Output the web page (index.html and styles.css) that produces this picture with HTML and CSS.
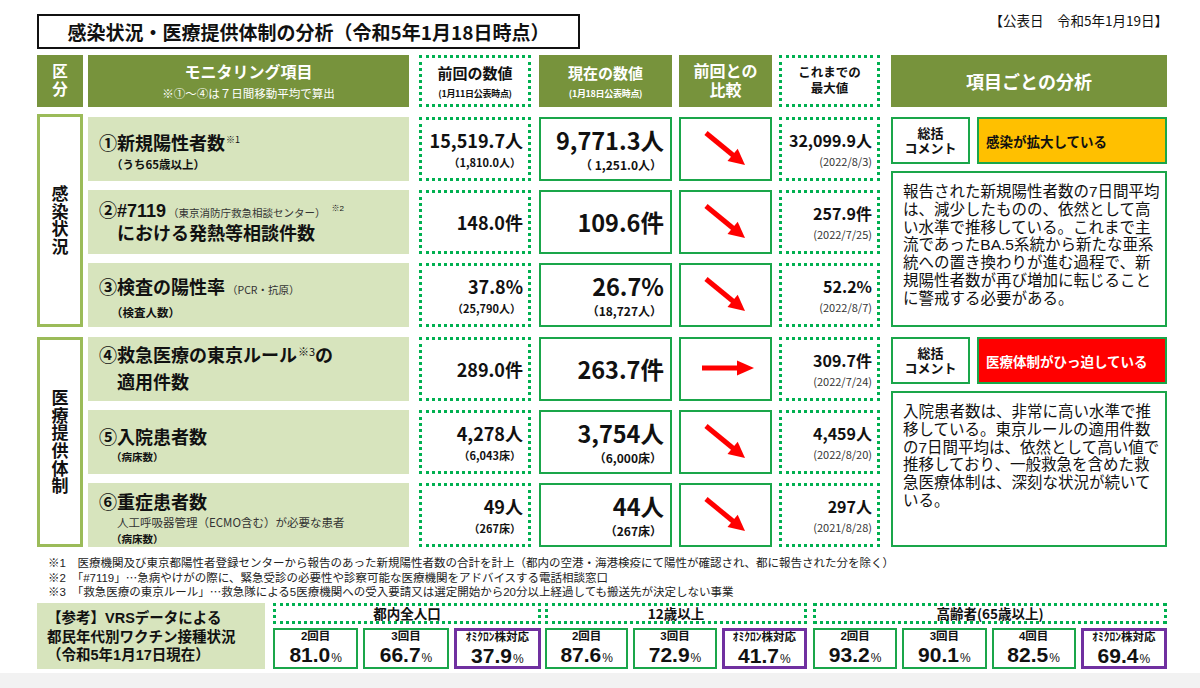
FILE: index.html
```html
<!DOCTYPE html>
<html lang="ja">
<head>
<meta charset="utf-8">
<title>感染状況・医療提供体制の分析</title>
<link rel="stylesheet" href="styles.css">
</head>
<body>
<div class="page">
  <div class="top">
    <div class="title">感染状況・医療提供体制の分析（令和5年1月18日時点）</div>
    <div class="pubdate">【公表日　令和5年1月19日】</div>
  </div>

  <div class="hdr">
    <div class="c-cat h-green h-cat">区<br>分</div>
    <div class="c-mon h-green"><div class="h-mon-t">モニタリング項目</div><div class="h-mon-s">※①～④は７日間移動平均で算出</div></div>
    <div class="c-prev h-dot"><div class="h-t">前回の数値</div><div class="h-s">(1月11日公表時点)</div></div>
    <div class="c-cur h-green"><div class="h-t">現在の数値</div><div class="h-s">(1月18日公表時点)</div></div>
    <div class="c-cmp h-green h-cmp">前回との<br>比較</div>
    <div class="c-max h-dot h-max">これまでの<br>最大値</div>
    <div class="c-ana h-green h-ana">項目ごとの分析</div>
  </div>

  <div class="section">
    <div class="cat cat-first"><span>感染状況</span></div>
    <div class="rows">
      <div class="drow">
        <div class="mon mon-a">
          <div class="mt">①新規陽性者数<span class="sup">※1</span></div>
          <div class="ms">（うち65歳以上）</div>
        </div>
        <div class="prev"><div class="pv">15,519.7人</div><div class="ps">（1,810.0人）</div></div>
        <div class="cur"><div class="cv">9,771.3人</div><div class="cs">（ 1,251.0人）</div></div>
        <div class="cmp"><svg class="arr-d" width="45" height="38" viewBox="0 0 45 38"><line x1="3" y1="3" x2="31" y2="26" stroke="#ff0000" stroke-width="5"/><polygon points="42,35 24.5,31.1 34.7,18.7" fill="#ff0000"/></svg></div>
        <div class="max"><div class="xv">32,099.9人</div><div class="xs">(2022/8/3)</div></div>
      </div>
      <div class="drow">
        <div class="mon">
          <div class="mt mt2">②#7119<span class="mnote">（東京消防庁救急相談センター）</span><span class="sup sup-s">※2</span><br><span class="ind">における発熱等相談件数</span></div>
        </div>
        <div class="prev"><div class="pv">148.0件</div></div>
        <div class="cur"><div class="cv">109.6件</div></div>
        <div class="cmp"><svg class="arr-d" width="45" height="38" viewBox="0 0 45 38"><line x1="3" y1="3" x2="31" y2="26" stroke="#ff0000" stroke-width="5"/><polygon points="42,35 24.5,31.1 34.7,18.7" fill="#ff0000"/></svg></div>
        <div class="max"><div class="xv">257.9件</div><div class="xs">(2022/7/25)</div></div>
      </div>
      <div class="drow">
        <div class="mon mon-a">
          <div class="mt">③検査の陽性率<span class="mnote">（PCR・抗原）</span></div>
          <div class="ms">（検査人数）</div>
        </div>
        <div class="prev"><div class="pv">37.8%</div><div class="ps">（25,790人）</div></div>
        <div class="cur"><div class="cv">26.7%</div><div class="cs">（18,727人）</div></div>
        <div class="cmp"><svg class="arr-d" width="45" height="38" viewBox="0 0 45 38"><line x1="3" y1="3" x2="31" y2="26" stroke="#ff0000" stroke-width="5"/><polygon points="42,35 24.5,31.1 34.7,18.7" fill="#ff0000"/></svg></div>
        <div class="max"><div class="xv">52.2%</div><div class="xs">(2022/8/7)</div></div>
      </div>
    </div>
    <div class="ana">
      <div class="sum">
        <div class="sum-l">総括<br>コメント</div>
        <div class="sum-r yellow">感染が拡大している</div>
      </div>
      <div class="atext">報告された新規陽性者数の7日間平均<br>は、減少したものの、依然として高<br>い水準で推移している。これまで主<br>流であったBA.5系統から新たな亜系<br>統への置き換わりが進む過程で、新<br>規陽性者数が再び増加に転じること<br>に警戒する必要がある。</div>
    </div>
  </div>

  <div class="section">
    <div class="cat"><span>医療提供体制</span></div>
    <div class="rows">
      <div class="drow">
        <div class="mon mon-4">
          <div class="mt mt4">④救急医療の東京ルール<span class="sup sup-m">※3</span>の<br><span class="ind">適用件数</span></div>
        </div>
        <div class="prev"><div class="pv">289.0件</div></div>
        <div class="cur"><div class="cv">263.7件</div></div>
        <div class="cmp"><svg class="arr-r" width="52" height="16" viewBox="0 0 52 16"><line x1="0" y1="8" x2="37" y2="8" stroke="#ff0000" stroke-width="5"/><polygon points="52,8 35,0.5 35,15.5" fill="#ff0000"/></svg></div>
        <div class="max"><div class="xv">309.7件</div><div class="xs">(2022/7/24)</div></div>
      </div>
      <div class="drow">
        <div class="mon mon-a">
          <div class="mt">⑤入院患者数</div>
          <div class="ms ms-s">（病床数）</div>
        </div>
        <div class="prev"><div class="pv">4,278人</div><div class="ps">（6,043床）</div></div>
        <div class="cur"><div class="cv">3,754人</div><div class="cs">（6,000床）</div></div>
        <div class="cmp"><svg class="arr-d" width="45" height="38" viewBox="0 0 45 38"><line x1="3" y1="3" x2="31" y2="26" stroke="#ff0000" stroke-width="5"/><polygon points="42,35 24.5,31.1 34.7,18.7" fill="#ff0000"/></svg></div>
        <div class="max"><div class="xv">4,459人</div><div class="xs">(2022/8/20)</div></div>
      </div>
      <div class="drow">
        <div class="mon mon-6">
          <div class="mt">⑥重症患者数</div>
          <div class="mnote2">人工呼吸器管理（ECMO含む）が必要な患者</div>
          <div class="ms ms-s ms-6">（病床数）</div>
        </div>
        <div class="prev"><div class="pv">49人</div><div class="ps">（267床）</div></div>
        <div class="cur"><div class="cv">44人</div><div class="cs">（267床）</div></div>
        <div class="cmp"><svg class="arr-d" width="45" height="38" viewBox="0 0 45 38"><line x1="3" y1="3" x2="31" y2="26" stroke="#ff0000" stroke-width="5"/><polygon points="42,35 24.5,31.1 34.7,18.7" fill="#ff0000"/></svg></div>
        <div class="max"><div class="xv">297人</div><div class="xs">(2021/8/28)</div></div>
      </div>
    </div>
    <div class="ana">
      <div class="sum">
        <div class="sum-l">総括<br>コメント</div>
        <div class="sum-r red">医療体制がひっ迫している</div>
      </div>
      <div class="atext">入院患者数は、非常に高い水準で推<br>移している。東京ルールの適用件数<br>の7日間平均は、依然として高い値で<br>推移しており、一般救急を含めた救<br>急医療体制は、深刻な状況が続いて<br>いる。</div>
    </div>
  </div>

  <div class="notes">※1　医療機関及び東京都陽性者登録センターから報告のあった新規陽性者数の合計を計上（都内の空港・海港検疫にて陽性が確認され、都に報告された分を除く）<br>※2　「#7119」<span class="ell">…</span>急病やけがの際に、緊急受診の必要性や診察可能な医療機関をアドバイスする電話相談窓口<br>※3　「救急医療の東京ルール」<span class="ell">…</span>救急隊による5医療機関への受入要請又は選定開始から20分以上経過しても搬送先が決定しない事業</div>

  <div class="vac">
    <div class="vrs">【参考】VRSデータによる<br>都民年代別ワクチン接種状況<br>（令和5年1月17日現在）</div>
    <div class="grp g1">
      <div class="gh">都内全人口</div>
      <div class="cards">
        <div class="card"><div class="cl">2回目</div><div class="cvl">81.0<span class="pc">%</span></div></div>
        <div class="card"><div class="cl">3回目</div><div class="cvl">66.7<span class="pc">%</span></div></div>
        <div class="card purple"><div class="cl">ｵﾐｸﾛﾝ株対応</div><div class="cvl">37.9<span class="pc">%</span></div></div>
      </div>
    </div>
    <div class="grp g2">
      <div class="gh">12歳以上</div>
      <div class="cards">
        <div class="card"><div class="cl">2回目</div><div class="cvl">87.6<span class="pc">%</span></div></div>
        <div class="card"><div class="cl">3回目</div><div class="cvl">72.9<span class="pc">%</span></div></div>
        <div class="card purple"><div class="cl">ｵﾐｸﾛﾝ株対応</div><div class="cvl">41.7<span class="pc">%</span></div></div>
      </div>
    </div>
    <div class="grp g3">
      <div class="gh">高齢者(65歳以上)</div>
      <div class="cards">
        <div class="card"><div class="cl">2回目</div><div class="cvl">93.2<span class="pc">%</span></div></div>
        <div class="card"><div class="cl">3回目</div><div class="cvl">90.1<span class="pc">%</span></div></div>
        <div class="card"><div class="cl">4回目</div><div class="cvl">82.5<span class="pc">%</span></div></div>
        <div class="card purple"><div class="cl">ｵﾐｸﾛﾝ株対応</div><div class="cvl">69.4<span class="pc">%</span></div></div>
      </div>
    </div>
  </div>
</div>
<div class="band"></div>
</body>
</html>
```

FILE: styles.css
```css
* { box-sizing: border-box; margin: 0; padding: 0; }
html, body { width: 1200px; height: 688px; overflow: hidden; background: #fff; }
body { font-family: "Noto Sans CJK JP", "Noto Sans", sans-serif; color: #111; }

/* multi-line blocks: Latin primary font (compact line metrics), CJK glyphs from Noto */
.h-cat, .h-cmp, .h-max, .sum-l, .atext, .notes, .vrs, .mt2, .card {
  font-family: "Liberation Sans", "Noto Sans CJK JP", sans-serif;
}
.ell { font-family: "Noto Sans CJK JP", sans-serif; line-height: 0; }

.page { padding-left: 37px; width: 1167px; }

.top { display: flex; justify-content: space-between; align-items: flex-start; padding-top: 14px; }
.title { width: 543px; height: 35px; border: 2px solid #111; font-size: 19px; font-weight: 700; line-height: 31px; text-align: center; white-space: nowrap; }
.pubdate { font-size: 13.5px; line-height: 18px; margin-top: -3px; margin-right: -1px; white-space: nowrap; }

/* column sizes */
.c-cat { width: 46px; }
.c-mon { width: 321px; margin-left: 5px; }
.c-prev { width: 112px; margin-left: 10px; }
.c-cur { width: 133px; margin-left: 8px; }
.c-cmp { width: 93px; margin-left: 7px; }
.c-max { width: 101px; margin-left: 7px; }
.c-ana { width: 276px; margin-left: 11px; }

/* header */
.hdr { display: flex; margin-top: 6px; height: 52px; }
.hdr > div { display: flex; flex-direction: column; align-items: center; justify-content: center; text-align: center; font-weight: 700; white-space: nowrap; }
.h-green { background: #77933c; color: #fff; }
.h-dot { border: 3px dotted #00b050; background: #fff; color: #111; }
.h-cat { font-size: 15.5px; line-height: 17.8px; }
.h-mon-t { font-size: 16px; line-height: 20px; }
.h-mon-s { font-size: 11.5px; font-weight: 400; line-height: 16px; margin-top: 4px; }
.h-t { font-size: 15px; line-height: 20px; }
.h-s { font-size: 9px; line-height: 12px; margin-top: 5px; letter-spacing: -0.3px; }
.h-cmp { font-size: 16px; line-height: 19px; }
.h-max { font-size: 12.5px; line-height: 16px; }
.h-ana { font-size: 18px; line-height: 22px; }

/* sections */
.section { display: flex; margin-top: 10px; }
.cat { width: 46px; border: 3px solid #9bbb59; display: flex; align-items: center; justify-content: center; }
.cat-first { margin-top: -3px; }
.cat span { writing-mode: vertical-rl; font-size: 17px; font-weight: 700; line-height: 1; letter-spacing: 0.7px; }

.rows { display: flex; flex-direction: column; gap: 9px; margin-left: 5px; width: 792px; }
.drow { display: flex; height: 64px; }

.mon { width: 321px; background: #d7e4bd; padding-left: 11px; display: flex; flex-direction: column; justify-content: center; white-space: nowrap; }
.mon-a { padding-top: 5px; }
.mon-6 { padding-top: 4px; }
.mt { font-size: 18px; font-weight: 700; line-height: 22px; }
.mt2 { line-height: 21px; padding-top: 1px; }
.mt4 { line-height: 27px; padding-bottom: 3px; }
.ind { padding-left: 18px; }
.sup { font-size: 9px; font-weight: 400; line-height: 0; vertical-align: 7px; margin-left: 1px; }
.sup-s { font-size: 8px; margin-left: 6px; vertical-align: 6px; }
.sup-m { font-size: 11px; vertical-align: 6px; }
.mnote { font-size: 10.5px; font-weight: 400; color: #333; margin-left: 2px; }
.ms { font-size: 11.5px; font-weight: 700; line-height: 16px; margin-top: 3px; margin-left: 12px; }
.ms-s { font-size: 10.5px; line-height: 14px; }
.ms-6 { margin-top: 2px; line-height: 13px; }
.mnote2 { font-size: 11.5px; color: #333; line-height: 15px; margin-top: 3px; margin-left: 18px; }

.prev { width: 112px; margin-left: 10px; border: 3px dotted #00b050; display: flex; flex-direction: column; justify-content: center; align-items: flex-end; padding-right: 5px; white-space: nowrap; }
.pv { font-size: 18px; font-weight: 700; line-height: 22px; }
.ps { font-size: 11px; font-weight: 700; line-height: 16px; margin-top: 3px; margin-right: 2px; }

.cur { width: 133px; margin-left: 8px; border: 2.5px solid #1aa64a; display: flex; flex-direction: column; justify-content: center; align-items: flex-end; padding-right: 6px; white-space: nowrap; }
.cv { font-size: 23.5px; font-weight: 700; line-height: 31px; }
.cs { font-size: 12px; font-weight: 700; line-height: 17.5px; margin-right: 2px; }

.cmp { width: 93px; margin-left: 7px; border: 2.5px solid #1aa64a; display: flex; align-items: center; justify-content: center; }
.arr-d { display: block; }
.arr-r { display: block; margin-left: 4px; margin-top: -2px; }

.max { width: 101px; margin-left: 7px; border: 3px dotted #00b050; display: flex; flex-direction: column; justify-content: center; align-items: flex-end; padding-right: 5px; white-space: nowrap; }
.xv { font-size: 16px; font-weight: 700; line-height: 20px; }
.xs { font-size: 11px; color: #333; line-height: 16px; margin-top: 3px; }

/* analysis */
.ana { width: 276px; margin-left: 11px; display: flex; flex-direction: column; gap: 7px; }
.sum { display: flex; height: 47px; }
.sum-l { width: 79px; border: 2.5px solid #1aa64a; display: flex; flex-direction: column; align-items: center; justify-content: center; text-align: center; font-size: 13px; font-weight: 700; line-height: 15px; }
.sum-r { flex: 1; margin-left: 7px; border: 2.5px solid #1aa64a; display: flex; align-items: center; padding-left: 7px; font-size: 13.5px; font-weight: 700; white-space: nowrap; }
.yellow { background: #ffc000; color: #111; }
.red { background: #ff0000; color: #fff; }
.atext { flex: 1; border: 2.5px solid #1aa64a; padding: 10px 4px 0 10px; font-size: 15.5px; line-height: 17.8px; white-space: nowrap; color: #111; }

/* footnotes */
.notes { margin-top: 9px; padding-left: 11px; font-size: 11.5px; line-height: 14.5px; color: #222; white-space: nowrap; }

/* vaccination */
.vac { display: flex; margin-top: 3px; height: 66px; }
.vrs { width: 228px; background: #d7e4bd; padding: 3px 0 0 10px; display: flex; flex-direction: column; justify-content: center; font-size: 14.5px; font-weight: 700; line-height: 18.5px; white-space: nowrap; }
.grp { display: flex; flex-direction: column; gap: 4px; }
.g1 { width: 268px; margin-left: 8px; }
.g2 { width: 262px; margin-left: 4px; }
.g3 { width: 354px; margin-left: 6px; }
.gh { height: 21px; border: 3px dotted #00b050; display: flex; align-items: center; justify-content: center; font-size: 13.5px; font-weight: 700; white-space: nowrap; }
.cards { display: flex; gap: 5px; height: 41px; }
.card { flex: 1; border: 2.5px solid #1aa64a; display: flex; flex-direction: column; align-items: center; white-space: nowrap; }
.card.purple { border: 3px solid #7030a0; }
.cl { font-size: 11.5px; font-weight: 700; line-height: 13px; }
.cvl { font-size: 21px; font-weight: 700; line-height: 23px; }
.pc { font-size: 12px; font-weight: 400; margin-left: 1px; }

.band { margin-top: 4px; height: 16px; background: #f2f2f2; }
```
